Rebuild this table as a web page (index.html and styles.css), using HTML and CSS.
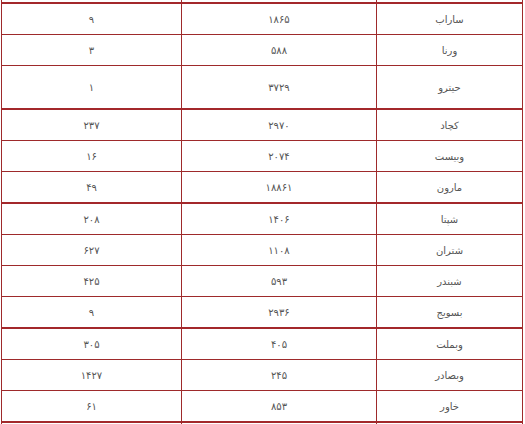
FILE: index.html
```html
<!DOCTYPE html>
<html lang="fa" dir="rtl">
<head>
<meta charset="utf-8">
<link rel="stylesheet" href="styles.css">
</head>
<body>
<div class="wrap">
<table class="grid">
  <colgroup><col class="c-name"><col class="c-mid"><col class="c-last"></colgroup>
  <tbody>
    <tr class="prev"><td></td><td></td><td></td></tr>
    <tr class="grp"><td>ساراب</td><td>۱۸۶۵</td><td>۹</td></tr>
    <tr><td>ورنا</td><td>۵۸۸</td><td>۳</td></tr>
    <tr class="tall"><td>حیترو</td><td>۳۷۲۹</td><td>۱</td></tr>
    <tr class="grp"><td>کچاد</td><td>۲۹۷۰</td><td>۲۳۷</td></tr>
    <tr><td>وبیست</td><td>۲۰۷۴</td><td>۱۶</td></tr>
    <tr><td>مارون</td><td>۱۸۸۶۱</td><td>۴۹</td></tr>
    <tr class="grp"><td>شپتا</td><td>۱۴۰۶</td><td>۲۰۸</td></tr>
    <tr><td>شتران</td><td>۱۱۰۸</td><td>۶۲۷</td></tr>
    <tr><td>شبندر</td><td>۵۹۳</td><td>۴۲۵</td></tr>
    <tr><td>بسویج</td><td>۲۹۳۶</td><td>۹</td></tr>
    <tr class="grp"><td>وبملت</td><td>۴۰۵</td><td>۳۰۵</td></tr>
    <tr><td>وبصادر</td><td>۲۴۵</td><td>۱۴۲۷</td></tr>
    <tr><td>خاور</td><td>۸۵۳</td><td>۶۱</td></tr>
    <tr class="grp"><td>&nbsp;</td><td>&nbsp;</td><td>&nbsp;</td></tr>
  </tbody>
</table>
</div>
</body>
</html>
```

FILE: styles.css
```css
html, body {
  margin: 0;
  padding: 0;
  background: #ffffff;
  overflow: hidden;
}
.wrap {
  padding: 0 2px 0 2px;
  margin-top: -29px;
}
.grid {
  width: 521px;
  border-collapse: collapse;
  table-layout: fixed;
  font-family: "DejaVu Sans", "Liberation Sans", sans-serif;
  font-size: 10px;
  color: #555555;
}
.c-name { width: 146px; }
.c-mid { width: 195px; }
.c-last { width: 180px; }
.grid td {
  border: 1px solid #9e2a2b;
  text-align: center;
  vertical-align: middle;
  padding: 0;
  height: 30px;
}
.grid tr.grp td {
  border-top: 2px solid #a3282b;
}
.grid tr.tall td {
  height: 42px;
}
```
